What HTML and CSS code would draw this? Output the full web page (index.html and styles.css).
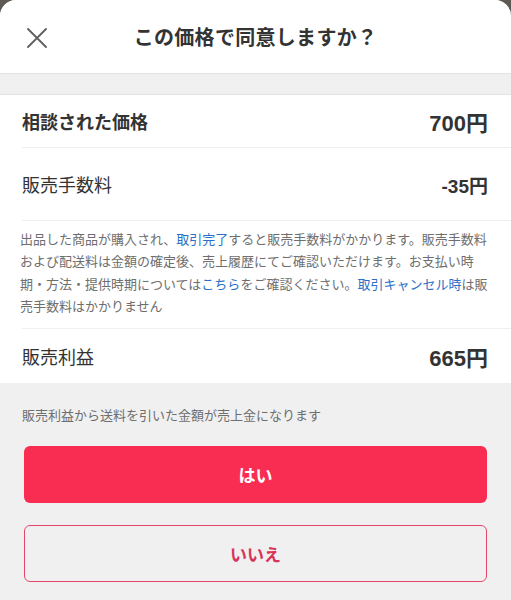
FILE: index.html
```html
<!DOCTYPE html>
<html lang="ja">
<head>
    <meta charset="UTF-8">
    <meta name="viewport" content="width=device-width, initial-scale=1.0">
    <title>この価格で同意しますか？</title>
    <link rel="stylesheet" href="styles.css">
</head>
<body>
    <div class="sheet">
        <div class="header">
            <button class="close-btn" aria-label="閉じる">
                <svg width="20" height="20" viewBox="0 0 20 20">
                    <path d="M1 1 L19 19 M19 1 L1 19" stroke="#5f5f5f" stroke-width="1.8" fill="none" stroke-linecap="round"/>
                </svg>
            </button>
            <h1 class="title">この価格で同意しますか？</h1>
            <span></span>
        </div>

        <div class="band"></div>

        <div class="summary">
            <div class="row row-first">
                <span class="label strong">相談された価格</span>
                <span class="price">700円</span>
            </div>
            <div class="row row-fee">
                <span class="label">販売手数料</span>
                <span class="price small">-35円</span>
            </div>
            <div class="note-wrap">
                <p class="note">出品した商品が購入され、<a href="#">取引完了</a>すると販売手数料がかかります。販売手数料および配送料は金額の確定後、売上履歴にてご確認いただけます。お支払い時期・方法・提供時期については<a href="#">こちら</a>をご確認ください。<a href="#">取引キャンセル時</a>は販売手数料はかかりません</p>
            </div>
            <div class="row row-last">
                <span class="label">販売利益</span>
                <span class="price">665円</span>
            </div>
        </div>

        <p class="sub-note">販売利益から送料を引いた金額が売上金になります</p>

        <div class="actions">
            <button class="yes-btn">はい</button>
            <button class="no-btn">いいえ</button>
        </div>
    </div>
</body>
</html>
```

FILE: styles.css
```css
body {
    margin: 0;
    padding: 0;
    background: #5e5a53;
    font-family: "Liberation Sans", "Noto Sans CJK JP", sans-serif;
    color: #333;
}

.sheet {
    background: #f0f0f1;
    border-radius: 16px 16px 0 0;
    min-height: 600px;
    overflow: hidden;
}

.header {
    background: #fff;
    height: 73px;
    display: grid;
    grid-template-columns: 1fr auto 1fr;
    align-items: center;
}

.close-btn {
    justify-self: start;
    background: none;
    border: none;
    padding: 0;
    margin: 2px 0 0 27px;
    width: 20px;
    height: 20px;
    cursor: pointer;
}

.title {
    margin: 0;
    font-size: 20px;
    font-weight: bold;
    color: #333;
    letter-spacing: 0.3px;
}

.band {
    height: 20px;
    background: #f0f0f0;
    border-top: 1px solid #e4e4e4;
    border-bottom: 1px solid #e4e4e4;
}

.summary {
    background: #fff;
}

.row {
    display: flex;
    justify-content: space-between;
    align-items: center;
    margin-left: 22px;
    padding-right: 23px;
    border-bottom: 1px solid #efefef;
}

.row-first {
    height: 52px;
}

.row-fee {
    height: 72px;
}

.row-last {
    height: 54px;
    border-bottom: none;
}

.label {
    font-size: 18px;
    color: #333;
}

.label.strong {
    font-weight: bold;
}

.price {
    font-size: 22px;
    font-weight: bold;
    color: #333;
}

.price.small {
    font-size: 19px;
}

.note-wrap {
    margin-left: 22px;
    border-bottom: 1px solid #efefef;
}

.note {
    margin: 0 0 0 -2px;
    padding: 8px 21px 9px 0;
    font-size: 13px;
    line-height: 22.4px;
    color: #6e6e6e;
}

.note a {
    color: #2c6fc7;
    text-decoration: none;
}

.sub-note {
    margin: 0;
    padding: 23px 22px 0;
    font-size: 13px;
    line-height: 20px;
    color: #6e6e6e;
}

.actions {
    display: flex;
    flex-direction: column;
    gap: 22px;
    padding: 20px 24px 0;
}

.actions button {
    height: 57px;
    border-radius: 6px;
    font-family: inherit;
    font-size: 17px;
    font-weight: bold;
    cursor: pointer;
}

.yes-btn {
    background: #f92d52;
    color: #fff;
    border: none;
}

.no-btn {
    background: transparent;
    color: #d8355a;
    border: 1.5px solid #e3486b;
}
```
